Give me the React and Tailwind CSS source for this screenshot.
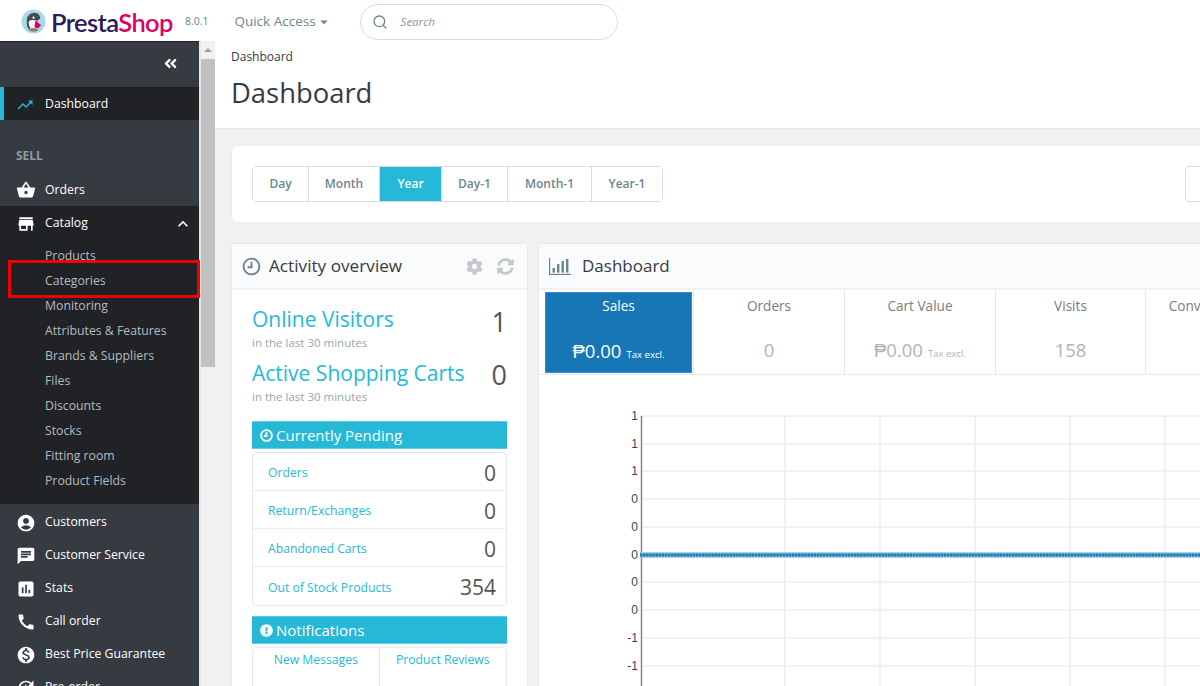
import React from 'react';
import {
  MdTrendingUp, MdShoppingBasket, MdStore, MdKeyboardArrowUp, MdAccountCircle, MdChat,
  MdAssessment, MdCall, MdMonetizationOn, MdUpdate, MdArrowDropDown,
} from 'react-icons/md';
import { FaAngleDoubleLeft, FaCog, FaSyncAlt, FaExclamationCircle } from 'react-icons/fa';
import { FiSearch } from 'react-icons/fi';

const subItems = ['Products', 'Categories', 'Monitoring', 'Attributes & Features', 'Brands & Suppliers', 'Files', 'Discounts', 'Stocks', 'Fitting room', 'Product Fields'];

const bottomItems = [
  { label: 'Customers', Icon: MdAccountCircle },
  { label: 'Customer Service', Icon: MdChat },
  { label: 'Stats', Icon: MdAssessment },
  { label: 'Call order', Icon: MdCall },
  { label: 'Best Price Guarantee', Icon: MdMonetizationOn },
  { label: 'Pre-order', Icon: MdUpdate },
];

const ranges = [
  { label: 'Day', w: 'w-[56px]' },
  { label: 'Month', w: 'w-[71px]' },
  { label: 'Year', w: 'w-[62px]', active: true },
  { label: 'Day-1', w: 'w-[66px]' },
  { label: 'Month-1', w: 'w-[84px]' },
  { label: 'Year-1', w: 'w-[70px]' },
];

const pending = [
  { label: 'Orders', value: '0' },
  { label: 'Return/Exchanges', value: '0' },
  { label: 'Abandoned Carts', value: '0' },
  { label: 'Out of Stock Products', value: '354' },
];

const kpis = [
  { label: 'Orders', value: '0', w: 'w-[151px]' },
  { label: 'Cart Value', value: '₱0.00', tax: true, w: 'w-[151px]' },
  { label: 'Visits', value: '158', w: 'w-[150px]' },
  { label: 'Conversion Rate', value: '', w: 'w-[150px]' },
];

const chartRows = [
  [416, '1'], [444, '1'], [471, '1'], [499, '0'], [527, '0'],
  [555, '0'], [582, '0'], [610, '0'], [638, '-1'], [666, '-1'],
];

function Logo() {
  return (
    <svg width="25" height="25" viewBox="0 0 26 26">
      <circle cx="13" cy="13" r="12.5" fill="#a5dbe8" />
      <path d="M6 12c0-5 4-8 8-8s6 3 6 6l-4 3-5 6-3 2c-2-2-2-6-2-9z" fill="#4a4a4e" />
      <path d="M8 13c2-2 6-2 8-1l-2 9c-3 1-6-1-6-8z" fill="#f4f4f2" />
      <path d="M15 12l6 5-3 3-4-1z" fill="#df0067" />
      <path d="M8 22c3 2 7 2 10 0l-2-2H10z" fill="#8d7d68" />
      <circle cx="13" cy="9" r="1.2" fill="#fff" />
    </svg>
  );
}

function ClockRing({ size, stroke, color }) {
  return (
    <svg width={size} height={size} viewBox="0 0 24 24" fill="none" stroke={color} strokeWidth={stroke}>
      <circle cx="12" cy="12" r="10" />
      <path d="M12 6v7H7" />
    </svg>
  );
}

function BarsIcon() {
  return (
    <svg width="22" height="17" viewBox="0 0 22 17" fill="#6c868e">
      <rect x="0" y="0" width="1.2" height="16" />
      <rect x="0" y="15.8" width="22" height="1.2" />
      <rect x="3.5" y="10" width="2.4" height="4.6" />
      <rect x="8" y="6" width="2.4" height="8.6" />
      <rect x="12.5" y="3" width="2.4" height="11.6" />
      <rect x="17" y="1" width="2.4" height="13.6" />
    </svg>
  );
}

function Sidebar() {
  return (
    <aside className="relative w-[199px] h-full shrink-0 bg-[#363a41] border-t border-[#202226]">
      <div className="h-[45px] flex items-center justify-end pr-[21px] pb-[2px] text-white">
        <FaAngleDoubleLeft size={15} />
      </div>
      <div className="h-[33px] flex items-center bg-[#202226] border-l-4 border-[#25b9d7] pt-[2px] pl-[12px] text-[12.25px] text-white">
        <MdTrendingUp size={18} className="text-[#25b9d7] mr-[11px]" />
        Dashboard
      </div>
      <div className="h-[52px] pt-[27px] pl-[16px] text-[12px] leading-[17px] font-bold text-[#8e9ba3]">SELL</div>
      <div className="h-[34px] flex items-center pt-[2px] pl-[17px] text-[12.25px] text-white">
        <MdShoppingBasket size={20} className="mr-[9px] -ml-[1px]" />
        Orders
      </div>
      <div className="bg-[#202226] h-[298px]">
        <div className="h-[33px] flex items-center pt-[2px] pl-[17px] pr-[6px] text-[12.25px] text-white">
          <MdStore size={20} className="mr-[9px] -ml-[1px]" />
          Catalog
          <MdKeyboardArrowUp size={20} className="ml-auto" />
        </div>
        <div className="pt-[3px]">
          {subItems.map((item) => (
            <div key={item} className="h-[25px] flex items-center pt-[4px] pl-[45px] text-[12.25px] text-[#b4bcc1]">{item}</div>
          ))}
        </div>
      </div>
      <div className="pt-[1px]">
        {bottomItems.map(({ label, Icon }) => (
          <div key={label} className="h-[33px] flex items-center pt-[2px] pl-[17px] text-[12.25px] text-white">
            <Icon size={20} className="mr-[9px] -ml-[1px]" />
            {label}
          </div>
        ))}
      </div>
      {/* kotak merah penanda menu */}
      <div className="absolute left-[8px] top-[218px] w-[192px] h-[38px] border-[3px] border-[#f00000]" />
    </aside>
  );
}

function Scrollbar() {
  return (
    <div className="w-[16px] h-full shrink-0 bg-[#f1f1f1] border-l-2 border-[#e6e6e6] flex flex-col items-center">
      <div className="h-[18px] flex items-center justify-center">
        <div className="w-0 h-0 border-x-[4px] border-x-transparent border-b-[4px] border-b-[#a3a3a3]" />
      </div>
      <div className="w-full h-[308px] bg-[#c1c1c1]" />
    </div>
  );
}

function ActivityPanel() {
  return (
    <section className="w-[295px] shrink-0 bg-white rounded-t-[4px] shadow-[0_0_3px_rgba(0,0,0,0.08)]">
      <div className="h-[46px] flex items-center pl-[10px] pr-[13px] bg-[#fafbfc] border-b-2 border-[#eff1f2] text-[#363a41]">
        <ClockRing size={19} stroke={2.4} color="#6c868e" />
        <span className="ml-[8px] text-[17.2px]">Activity overview</span>
        <FaCog size={17} className="ml-auto text-[#c4c8ca]" />
        <FaSyncAlt size={17} className="ml-[14px] text-[#c4c8ca]" />
      </div>
      <div className="px-[20px]">
        <div className="flex justify-between h-[54px] pt-[14px]">
          <div>
            <div className="text-[21px] leading-[31px] text-[#25b9d7]">Online Visitors</div>
            <div className="text-[11.5px] leading-[16px] text-[#a0a4a7]">in the last 30 minutes</div>
          </div>
          <div className="text-[27px] leading-[35px] text-[#555]">1</div>
        </div>
        <div className="flex justify-between h-[54px] pt-[13px]">
          <div>
            <div className="text-[21px] leading-[32px] text-[#25b9d7]">Active Shopping Carts</div>
            <div className="text-[11.5px] leading-[16px] text-[#a0a4a7]">in the last 30 minutes</div>
          </div>
          <div className="text-[27px] leading-[36px] text-[#555]">0</div>
        </div>
        <div className="mt-[23px] h-[28px] bg-[#25b9d7] border-y border-[#5fcde3] flex items-center pl-[8px] text-white text-[15px]">
          <ClockRing size={13} stroke={3.5} color="#ffffff" />
          <span className="ml-[3px]">Currently Pending</span>
        </div>
        <div className="mt-[3px] border border-[#e6e9eb] rounded-[4px]">
          {pending.map((row) => (
            <div key={row.label} className="h-[38px] flex items-center justify-between pt-[4px] pl-[15px] pr-[10px] border-b border-[#eaedee] last:border-b-0">
              <span className="text-[12.2px] text-[#25b9d7]">{row.label}</span>
              <span className="text-[21px] text-[#555]">{row.value}</span>
            </div>
          ))}
        </div>
        <div className="mt-[10px] h-[28px] bg-[#25b9d7] border-y border-[#5fcde3] flex items-center pl-[8px] text-white text-[15px]">
          <FaExclamationCircle size={13} />
          <span className="ml-[3px]">Notifications</span>
        </div>
        <div className="mt-[3px] h-[60px] border border-[#e6e9eb] rounded-t-[4px] flex">
          <div className="w-1/2 border-r border-[#e6e9eb] text-center text-[12.2px] leading-[24px] text-[#25b9d7]">New Messages</div>
          <div className="w-1/2 text-center text-[12.2px] leading-[24px] text-[#25b9d7]">Product Reviews</div>
        </div>
      </div>
    </section>
  );
}

function Chart() {
  const gridX = [785, 880, 975, 1070, 1165];
  return (
    <svg width="680" height="300" viewBox="539 400 680 300" className="block">
      {chartRows.map(([y], i) => (
        <line key={i} x1="641" x2="1219" y1={y} y2={y} stroke="#eeeeee" strokeWidth="1.5" />
      ))}
      {gridX.map((x) => (
        <line key={x} x1={x} x2={x} y1="416" y2="700" stroke="#eeeeee" strokeWidth="1.5" />
      ))}
      <line x1="641.5" x2="641.5" y1="416" y2="700" stroke="#7d7d7d" strokeWidth="1.4" />
      {chartRows.map(([y, label], i) => (
        <text key={i} x="638" y={y + 4} textAnchor="end" fontSize="12" fontFamily="'Liberation Sans', sans-serif" fill="#444">{label}</text>
      ))}
      <line x1="640" x2="1219" y1="555" y2="555" stroke="#8fc4e2" strokeWidth="5.5" />
      <line x1="640" x2="1219" y1="555" y2="555" stroke="#1f77b4" strokeWidth="3" strokeDasharray="2.5 0.6" />
    </svg>
  );
}

function DashboardPanel() {
  return (
    <section className="w-[680px] shrink-0 bg-white rounded-t-[4px] shadow-[0_0_3px_rgba(0,0,0,0.08)] overflow-hidden">
      <div className="h-[46px] flex items-center pl-[10px] bg-[#fafbfc] border-b-2 border-[#eff1f2] text-[#363a41]">
        <BarsIcon />
        <span className="ml-[11px] text-[17px]">Dashboard</span>
      </div>
      <div className="h-[85px] flex pl-[2px] border-b border-[#e6e9eb]">
        <div className="w-[153px] shrink-0 pl-[4px] py-[2px] border-r border-[#e6e9eb]">
          <div className="h-[81px] w-[147px] bg-[#1777b6] border border-[#3a8ec4] text-white text-center">
            <div className="pt-[3px] text-[13.6px] leading-[20px]">Sales</div>
            <div className="mt-[21px] leading-[28px]">
              <span className="text-[18.5px]">₱0.00</span>
              <span className="ml-[5px] text-[9.6px]">Tax excl.</span>
            </div>
          </div>
        </div>
        {kpis.map((k) => (
          <div key={k.label} className={`${k.w} shrink-0 border-r border-[#e6e9eb] text-center pt-[6px]`}>
            <div className="text-[13.6px] leading-[20px] text-[#7d7d7d] whitespace-nowrap">{k.label}</div>
            <div className="mt-[20px] leading-[28px] text-[#b3b3b3]">
              <span className="text-[18.5px]">{k.value}</span>
              {k.tax && <span className="ml-[5px] text-[9.6px]">Tax excl.</span>}
            </div>
          </div>
        ))}
      </div>
      <div className="h-[25px]" />
      <Chart />
    </section>
  );
}

export default function App() {
  return (
    <div className="w-[1200px] h-[686px] overflow-hidden bg-white font-['Open_Sans',sans-serif] flex flex-col">
      <header className="h-[41px] shrink-0 flex items-center pl-[21px] pt-[2px]">
        <Logo />
        <span className="ml-[5px] text-[25.5px] leading-[30px] font-semibold tracking-[-0.6px] font-['Lato',sans-serif]">
          <span className="text-[#2c1a5a]">Presta</span><span className="text-[#df0067]">Shop</span>
        </span>
        <span className="ml-[12px] text-[10.5px] text-[#6c868e]">8.0.1</span>
        <span className="ml-[26px] flex items-center text-[13.5px] text-[#6c868e]">
          Quick Access
          <MdArrowDropDown size={18} className="-ml-[1px]" />
        </span>
        <div className="ml-[27px] w-[258px] h-[36px] border border-[#d3dfe2] rounded-full flex items-center pl-[11px] text-[#6c868e]">
          <FiSearch size={16} />
          <span className="ml-[13px] text-[11.5px] italic text-[#8a979c]">Search</span>
        </div>
      </header>
      <div className="flex-1 flex min-h-0">
        <Sidebar />
        <Scrollbar />
        <main className="flex-1 min-w-0 bg-[#eff1f2] overflow-hidden">
          <div className="h-[88px] bg-white border-b border-[#e6e9eb] pl-[16px] pt-[8px] text-[#363a41]">
            <div className="text-[12px] leading-[16px]">Dashboard</div>
            <div className="mt-[8px] text-[27.4px] leading-[40px]">Dashboard</div>
          </div>
          <div className="pl-[17px] pt-[17px] w-[1040px]">
            <div className="h-[76px] bg-white rounded-[5px] flex items-center pl-[20px] shadow-[0_0_3px_rgba(0,0,0,0.06)]">
              <div className="flex h-[36px] border border-[#d3dfe2] rounded-[4px]">
                {ranges.map((r) => (
                  <div
                    key={r.label}
                    className={`${r.w} flex items-center justify-center text-[12px] font-semibold border-r border-[#d3dfe2] last:border-r-0 ${r.active ? 'bg-[#25b9d7] text-white font-bold' : 'bg-white text-[#6c868e]'}`}
                  >
                    {r.label}
                  </div>
                ))}
              </div>
              <div className="ml-[522px] h-[36px] w-[60px] shrink-0 bg-white border border-[#d3dfe2] rounded-[4px]" />
            </div>
            <div className="mt-[22px] flex gap-[12px]">
              <ActivityPanel />
              <DashboardPanel />
            </div>
          </div>
        </main>
      </div>
    </div>
  );
}
